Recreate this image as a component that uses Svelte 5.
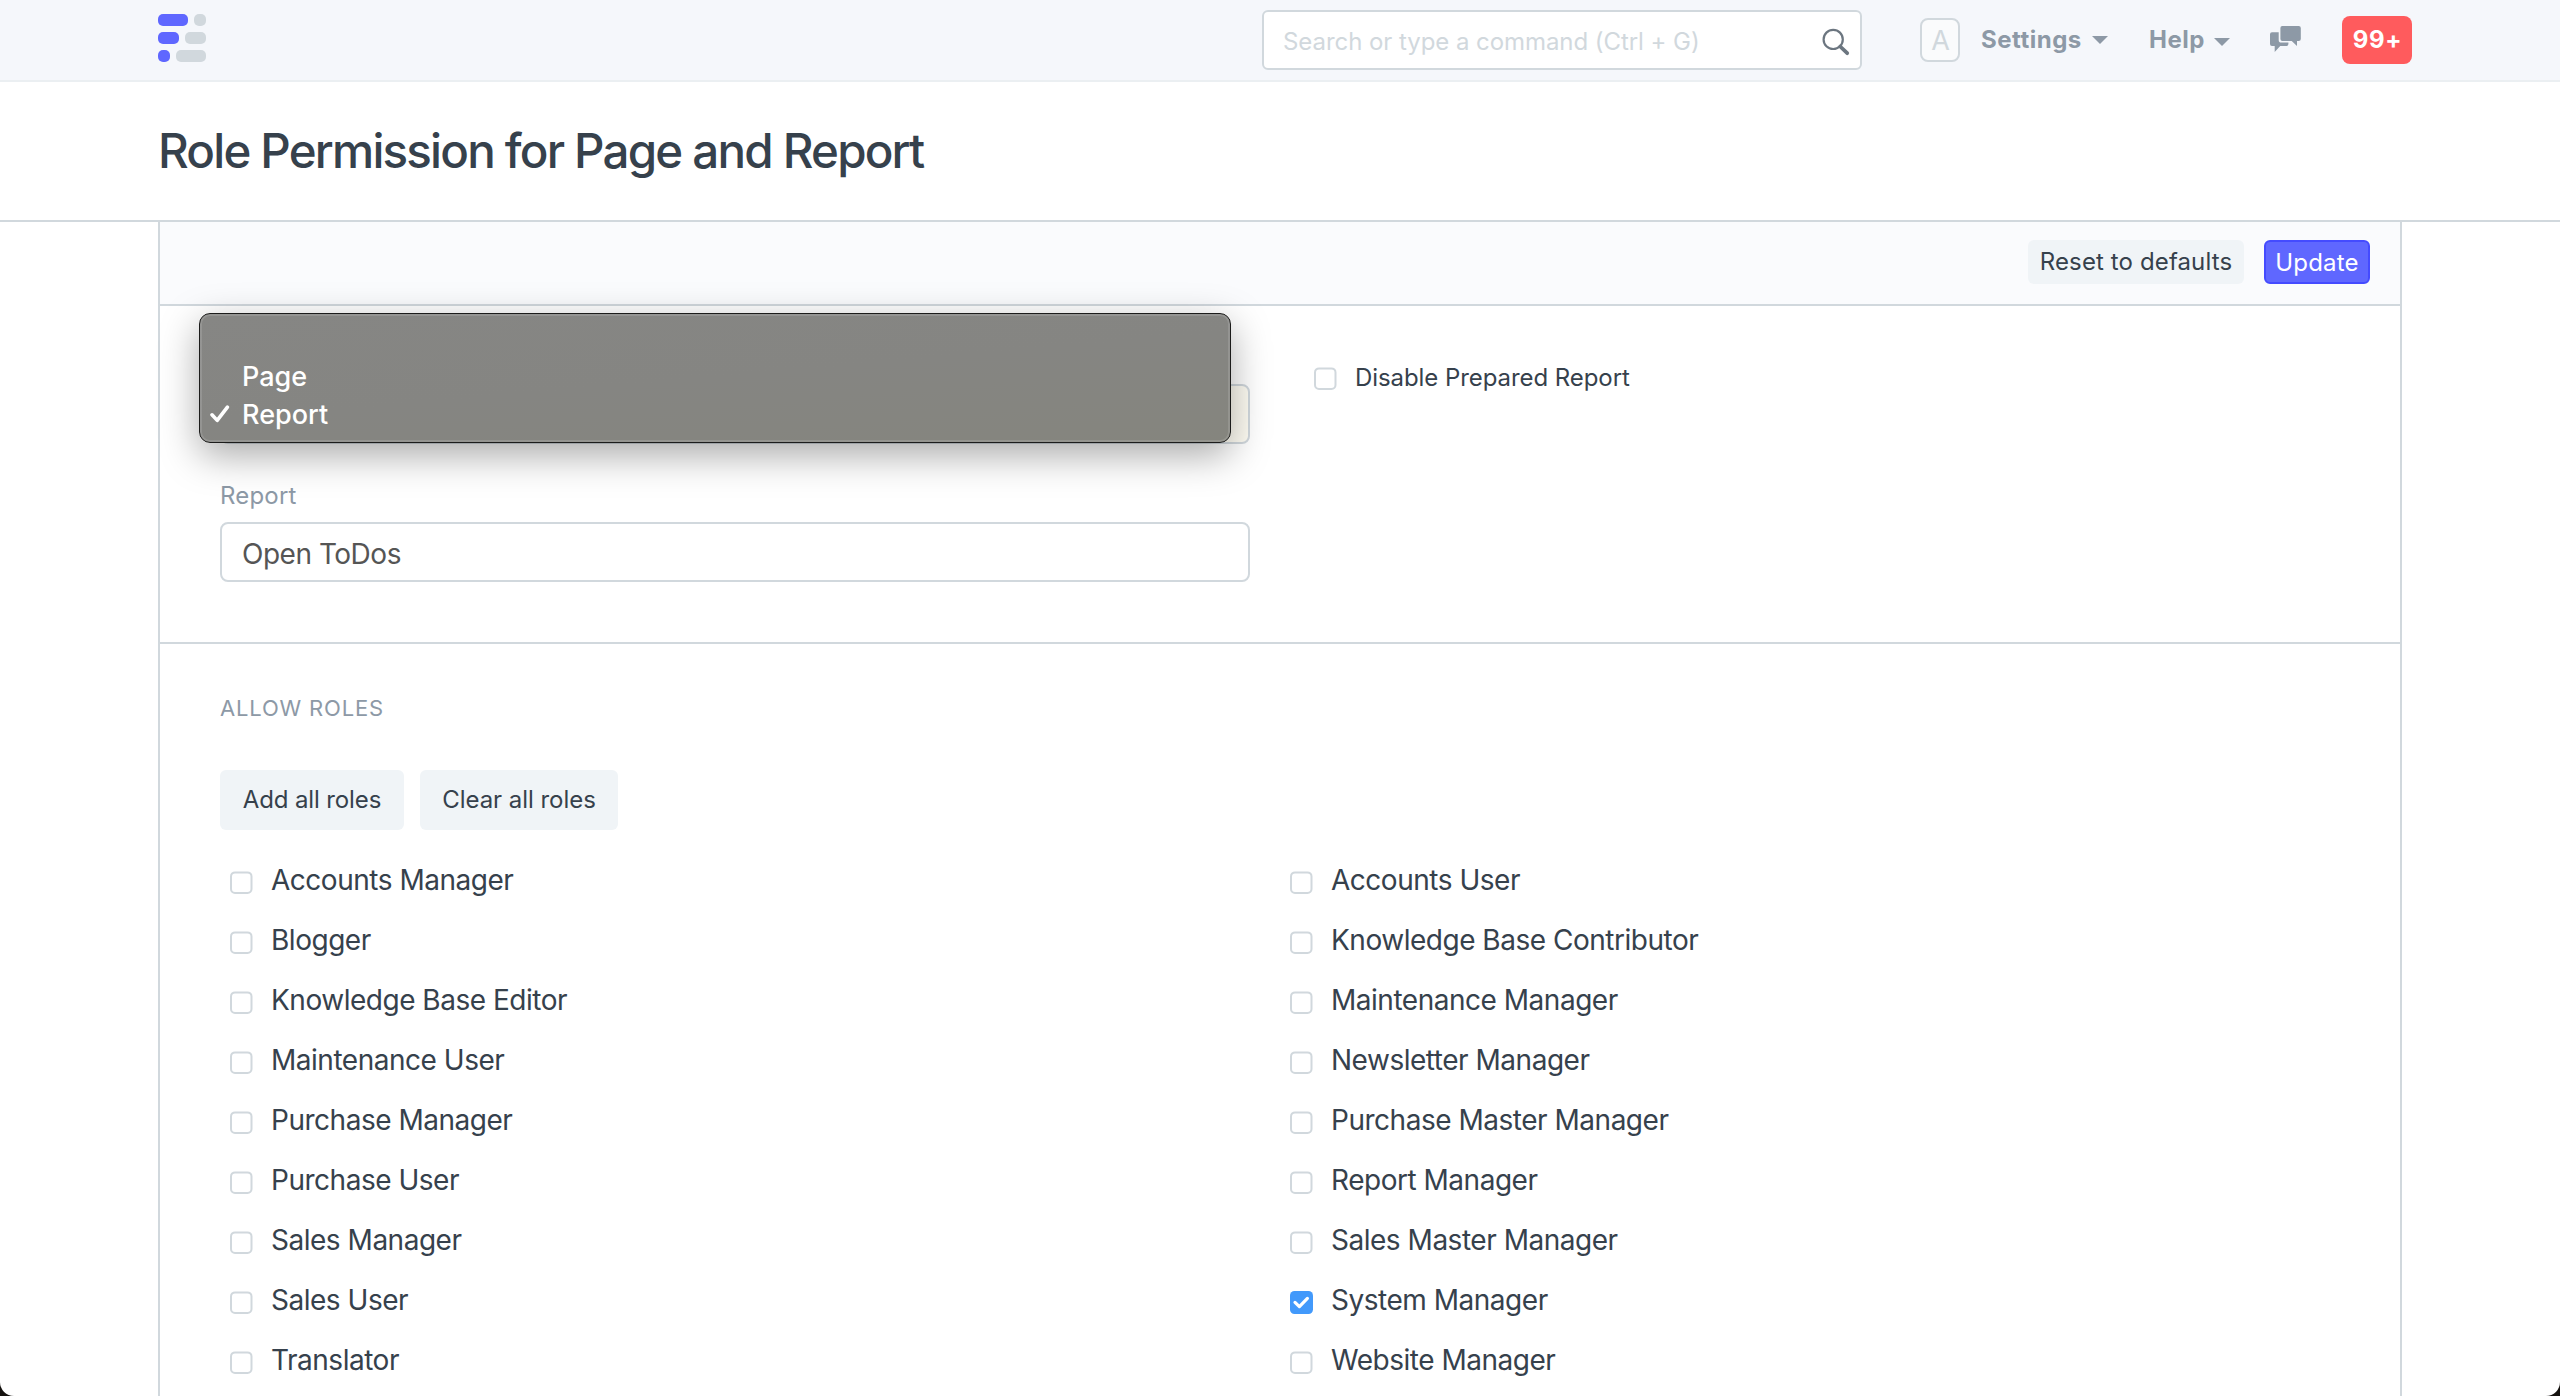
<script>
  const roles = [
    { name: 'Accounts Manager' },
    { name: 'Accounts User' },
    { name: 'Blogger' },
    { name: 'Knowledge Base Contributor' },
    { name: 'Knowledge Base Editor' },
    { name: 'Maintenance Manager' },
    { name: 'Maintenance User' },
    { name: 'Newsletter Manager' },
    { name: 'Purchase Manager' },
    { name: 'Purchase Master Manager' },
    { name: 'Purchase User' },
    { name: 'Report Manager' },
    { name: 'Sales Manager' },
    { name: 'Sales Master Manager' },
    { name: 'Sales User' },
    { name: 'System Manager', checked: true },
    { name: 'Translator' },
    { name: 'Website Manager' }
  ];
  const options = ['', 'Page', 'Report'];
  const selected = 'Report';
</script>

{#snippet checkbox(checked)}
  <svg class="checkbox" viewBox="0 0 23 23">
    {#if checked}
      <rect x="0" y="0" width="23" height="23" rx="4.5" fill="#4299fb" />
      <path d="M5 11.4 L9.4 15.6 L17.4 7.4" fill="none" stroke="#fff" stroke-width="3.2" stroke-linecap="round" stroke-linejoin="round" />
    {:else}
      <rect x="1" y="1.4" width="20.5" height="20.6" rx="4" fill="#fff" stroke="#d1d8dd" stroke-width="2" />
    {/if}
  </svg>
{/snippet}

<div class="window">
  <nav class="navbar">
    <svg class="logo" viewBox="0 0 48 48">
      <g fill="#5f67ff">
        <rect x="0" y="0" width="30" height="12" rx="5" />
        <rect x="0" y="18" width="21" height="12" rx="5" />
        <rect x="0" y="36" width="12" height="12" rx="5" />
      </g>
      <g fill="#d1d8dd">
        <rect x="36" y="0" width="12" height="12" rx="5" />
        <rect x="27" y="18" width="21" height="12" rx="5" />
        <rect x="18" y="36" width="30" height="12" rx="5" />
      </g>
    </svg>
    <div class="search">
      <span>Search or type a command (Ctrl + G)</span>
      <svg class="search-icon" viewBox="0 0 28 28">
        <circle cx="11.2" cy="11.4" r="9.6" fill="none" stroke="#6c7680" stroke-width="2.2" />
        <path d="M18.2 18.5 L25.2 25.2" stroke="#6c7680" stroke-width="3.8" stroke-linecap="round" />
      </svg>
    </div>
    <div class="avatar">A</div>
    <div class="menu settings">Settings<i class="caret"></i></div>
    <div class="menu help">Help<i class="caret low"></i></div>
    <svg class="chat" viewBox="0 0 31 26">
      <g fill="#8d99a6">
        <path d="M12.3 0 H28.7 Q30.8 0 30.8 2 V13 Q30.8 15 28.7 15 H27 V20 L21.7 15 H12.3 Q10.4 15 10.4 13 V2 Q10.4 0 12.3 0 Z" />
        <path d="M2 6.2 H8.7 V14 Q8.7 16.6 11.3 16.6 H18.4 V18 Q18.4 20 16.4 20 H10.2 L4.7 25.9 V20 H2 Q0 20 0 18 V8.2 Q0 6.2 2 6.2 Z" />
      </g>
    </svg>
    <div class="badge">99+</div>
  </nav>

  <header class="page-head"><h1>Role Permission for Page and Report</h1></header>

  <main class="panel">
    <div class="toolbar">
      <button class="btn small reset">Reset to defaults</button>
      <button class="btn small primary">Update</button>
    </div>

    <section class="filters">
      <div class="fields">
        <div class="select">
          <ul class="dropdown">
            {#each options as option}
              <li>
                {#if option === selected}
                  <svg class="tick" viewBox="0 0 20 18"><path d="M2 9.8 L7.2 15.4 L17.4 2.2" fill="none" stroke="#fff" stroke-width="3.6" stroke-linecap="round" stroke-linejoin="round" /></svg>
                {/if}
                <span>{option}</span>
              </li>
            {/each}
          </ul>
        </div>
        <div class="label">Report</div>
        <div class="input">Open ToDos</div>
      </div>
      <div class="option">
        {@render checkbox(false)}
        <span>Disable Prepared Report</span>
      </div>
    </section>

    <section class="roles">
      <h2>ALLOW ROLES</h2>
      <div class="actions">
        <button class="btn large add">Add all roles</button>
        <button class="btn large clear">Clear all roles</button>
      </div>
      <div class="grid">
        {#each roles as role}
          <div class="role">
            {@render checkbox(role.checked)}
            <span>{role.name}</span>
          </div>
        {/each}
      </div>
    </section>
  </main>
</div>

<style>
  :global(body) {
    background: #15120f;
    overflow: hidden;
  }
  .window {
    box-sizing: border-box;
    height: 1396px;
    overflow: hidden;
    display: flex;
    flex-direction: column;
    background: #fff;
    border-radius: 0 0 14px 14px;
    color: #36414c;
    font-family: Inter, 'Liberation Sans', sans-serif;
    font-size: 24px;
  }
  .window * {
    box-sizing: border-box;
  }

  .navbar {
    height: 82px;
    flex: none;
    display: flex;
    align-items: flex-start;
    padding-left: 158px;
    background: #f5f7fb;
    border-bottom: 2px solid #ebeff2;
    color: #8d99a6;
  }
  .logo {
    width: 48px;
    height: 48px;
    margin-top: 14px;
  }
  .search {
    display: flex;
    justify-content: space-between;
    width: 600px;
    height: 60px;
    margin: 10px 0 0 1056px;
    padding: 0 10px 0 19px;
    border: 2px solid #d1d8dd;
    border-radius: 6px;
    background: #fff;
    color: #d1d8dd;
    line-height: 59px;
    letter-spacing: -0.06px;
    white-space: nowrap;
  }
  .search-icon {
    width: 28px;
    height: 28px;
    margin-top: 16px;
  }
  .avatar {
    width: 40px;
    height: 44px;
    margin: 18px 0 0 58px;
    border: 2px solid #d1d8dd;
    border-radius: 8px;
    background: #fafbfc;
    color: #d1d8dd;
    font-size: 27px;
    line-height: 41px;
    padding-left: 1px;
    text-align: center;
  }
  .menu {
    display: flex;
    justify-content: space-between;
    font-weight: 700;
    line-height: 79px;
    letter-spacing: 0.5px;
  }
  .settings {
    width: 127px;
    margin-left: 21px;
  }
  .help {
    width: 81px;
    margin-left: 41px;
  }
  .caret {
    width: 16px;
    height: 8px;
    margin-top: 36px;
    background: #8d99a6;
    clip-path: polygon(0 0, 100% 0, 50% 100%);
  }
  .caret.low {
    margin-top: 38px;
  }
  .chat {
    width: 31px;
    height: 26px;
    margin: 26px 0 0 40px;
  }
  .badge {
    width: 70px;
    height: 48px;
    margin: 16px 0 0 41px;
    padding-left: 1px;
    border-radius: 8px;
    background: #ff5b5d;
    color: #fff;
    font-weight: 700;
    line-height: 47px;
    letter-spacing: 0.7px;
    text-align: center;
  }

  .page-head {
    height: 140px;
    flex: none;
    padding-left: 158px;
    border-bottom: 2px solid #d1d8dd;
  }
  h1 {
    margin: 0;
    font-size: 47.5px;
    font-weight: 550;
    line-height: 138px;
    letter-spacing: -1.8px;
  }

  .panel {
    flex: 1;
    width: 2244px;
    margin-left: 158px;
    border: solid #d1d8dd;
    border-width: 0 2px;
  }
  .toolbar {
    height: 84px;
    display: flex;
    justify-content: flex-end;
    gap: 20px;
    padding: 18px 30px 0 0;
    background: #fafbfd;
    border-bottom: 2px solid #d1d8dd;
  }
  .btn {
    border: 0;
    padding: 0;
    border-radius: 6px;
    background: #f0f4f7;
    color: #36414c;
    font: 400 24px Inter, 'Liberation Sans', sans-serif;
    display: block;
    text-align: center;
    white-space: nowrap;
  }
  .small {
    height: 44px;
    padding-bottom: 1px;
    line-height: 43px;
  }
  .reset {
    width: 216px;
    letter-spacing: 0.12px;
  }
  .primary {
    width: 106px;
    padding-bottom: 0;
    border: 2px solid #444bff;
    background: #5f67ff;
    color: #fff;
    line-height: 39px;
    letter-spacing: 0.2px;
  }

  .filters {
    height: 338px;
    display: flex;
    padding-left: 60px;
    border-bottom: 2px solid #d1d8dd;
  }
  .fields {
    width: 1030px;
    padding-top: 78px;
  }
  .select {
    position: relative;
    height: 60px;
    border: 2px solid #d1d8dd;
    border-radius: 8px;
    background: #fffdf4;
  }
  .dropdown {
    position: absolute;
    left: -23px;
    top: -73px;
    width: 1032px;
    height: 130px;
    margin: 0;
    padding: 6px 0 0;
    list-style: none;
    border: 1px solid #1c1c1b;
    border-radius: 11px;
    background: linear-gradient(175deg, #868684 0%, #858582 50%, #85857e 100%);
    box-shadow:
      inset 0 0 0 2px rgba(255, 255, 255, 0.13),
      0 12px 38px rgba(0, 0, 0, 0.34);
    color: #fff;
    font-size: 27px;
    font-weight: 550;
    line-height: 37px;
  }
  .dropdown li {
    display: flex;
    height: 38px;
    padding-left: 42px;
  }
  .tick {
    width: 20px;
    height: 18px;
    margin: 9px 12px 0 -32px;
  }
  .label {
    margin: 37px 0 12px;
    color: #8d99a6;
    line-height: 29px;
    letter-spacing: 0.18px;
  }
  .input {
    height: 60px;
    padding-left: 20px;
    border: 2px solid #d1d8dd;
    border-radius: 8px;
    color: #555;
    font-size: 28px;
    line-height: 60px;
    letter-spacing: -0.48px;
  }
  .option {
    display: flex;
    gap: 18px;
    padding: 57px 0 0 64px;
    line-height: 29px;
    letter-spacing: -0.07px;
  }
  .checkbox {
    flex: none;
    width: 23px;
    height: 23px;
  }
  .option .checkbox {
    margin-top: 4px;
  }

  .roles {
    padding: 51px 0 0 60px;
  }
  h2 {
    margin: 0 0 49px;
    color: #8d99a6;
    font-size: 22px;
    font-weight: 400;
    line-height: 26px;
    letter-spacing: 0.82px;
  }
  .actions {
    display: flex;
    gap: 16px;
    margin-bottom: 20px;
  }
  .large {
    height: 60px;
    padding-bottom: 1px;
    line-height: 59px;
  }
  .add {
    width: 184px;
    letter-spacing: -0.13px;
  }
  .clear {
    width: 198px;
    letter-spacing: -0.04px;
  }
  .grid {
    display: grid;
    grid-template-columns: 1060px 1060px;
    grid-auto-rows: 60px;
  }
  .role {
    display: flex;
    gap: 18px;
    padding-left: 10px;
    font-size: 28px;
    line-height: 60px;
    letter-spacing: -0.48px;
  }
  .role .checkbox {
    margin-top: 21px;
  }
</style>
